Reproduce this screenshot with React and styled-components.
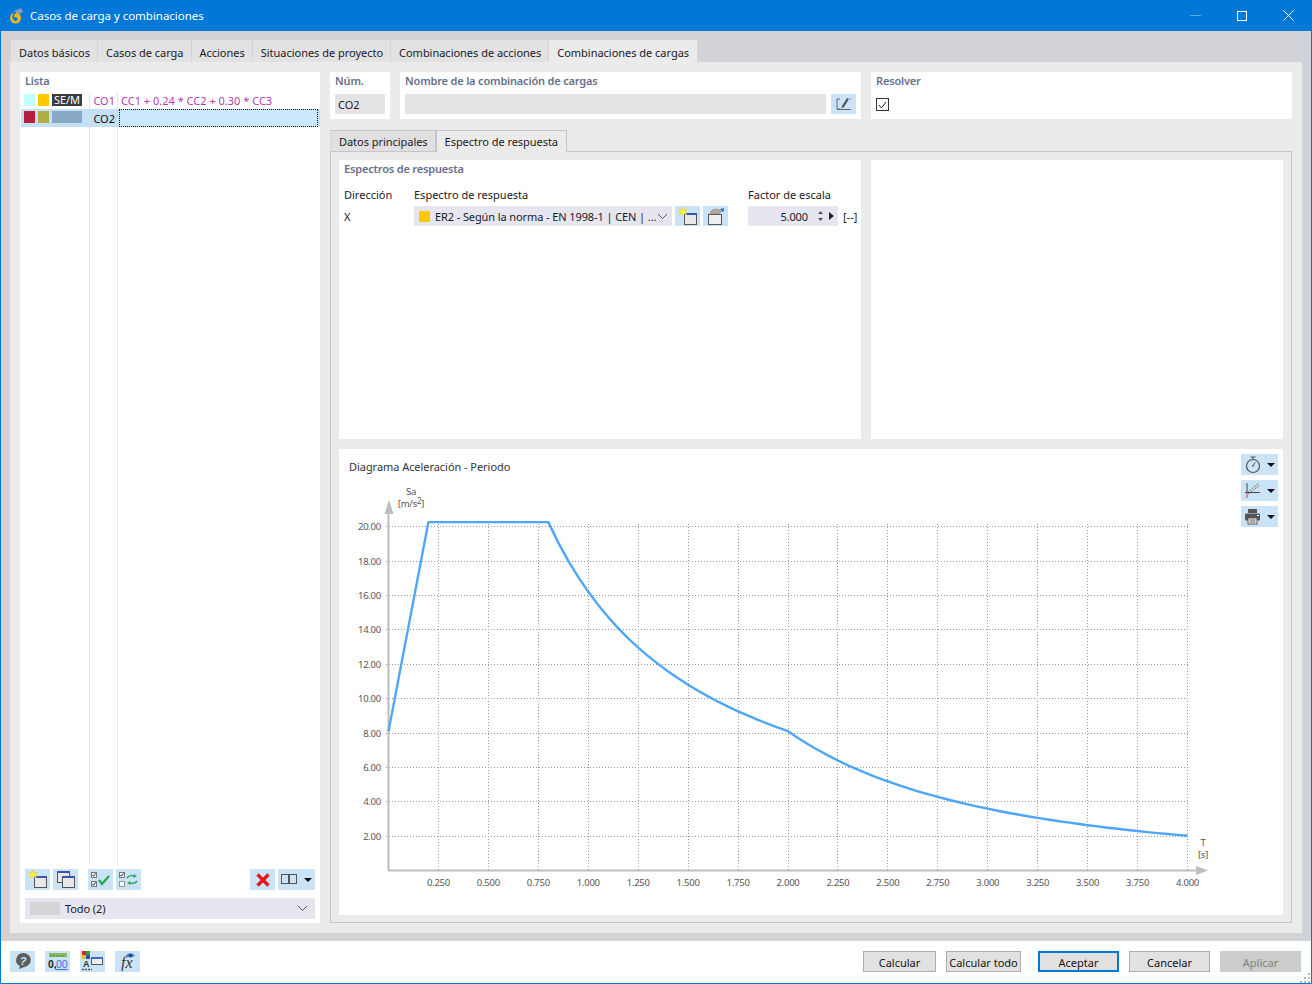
import React from "react";
import styled, { createGlobalStyle } from "styled-components";

const GlobalStyle = createGlobalStyle`
  html, body { margin: 0; padding: 0; background: #fff; }
  * { box-sizing: border-box; }
  body { font-family: "Noto Sans", "Open Sans", sans-serif; font-size: 11px; color: #1a1a1a; }
`;

const Win = styled.div`
  width: 1312px;
  height: 984px;
  display: flex;
  flex-direction: column;
  border: 1px solid #0078d7;
  border-top: 0;
  overflow: hidden;
  background: #fff;
`;

const TitleBar = styled.div`
  height: 31px;
  flex: none;
  margin: 0 -1px;
  background: #0078d7;
  color: #fff;
  display: flex;
  align-items: center;
  padding: 0 1px 0 9px;
  font-size: 11.5px;
`;

const TitleText = styled.span`
  margin-left: 7px;
  flex: 1;
  letter-spacing: -0.03px;
`;

const WinBtn = styled.div`
  width: 46px;
  height: 31px;
  display: flex;
  align-items: center;
  justify-content: center;
`;

const Body = styled.div`
  flex: 1;
  background: #d3d3d7;
  padding: 9px 9px 8px 9px;
  display: flex;
  flex-direction: column;
  min-height: 0;
`;

const TabRow = styled.div`
  display: flex;
  height: 22px;
  padding-left: 1px;
  flex: none;
`;

const MainTab = styled.div`
  padding: 2px 8px 0;
  display: flex;
  align-items: center;
  font-size: 11px;
  letter-spacing: -0.02px;
  background: ${(p) => (p.$active ? "#ebebeb" : "#e2e2e4")};
  box-shadow: inset -1px 0 0 ${(p) => (p.$active ? "#ebebeb" : "#d3d3d7")};
  white-space: nowrap;
`;

const Panel = styled.div`
  flex: 1;
  background: #ebebeb;
  padding: 10px;
  display: flex;
  gap: 10px;
  min-height: 0;
`;

const LeftPane = styled.div`
  width: 300px;
  flex: none;
  background: #fff;
  display: flex;
  flex-direction: column;
  padding-bottom: 4px;
`;

const PaneLabel = styled.div`
  font-size: 11px;
  font-weight: 600;
  letter-spacing: -0.18px;
  color: #66708c;
  padding: 2px 5px 0;
  height: 20px;
  line-height: 14px;
  white-space: nowrap;
`;

const ListArea = styled.div`
  flex: 1;
  position: relative;
  display: flex;
  flex-direction: column;
  background:
    linear-gradient(#e4e4e4, #e4e4e4) 69px 0 / 1px 100% no-repeat,
    linear-gradient(#e4e4e4, #e4e4e4) 97px 0 / 1px 100% no-repeat;
`;

const ListRow = styled.div`
  height: ${(p) => (p.$selected ? 18 : 17)}px;
  display: flex;
  align-items: center;
  margin-left: 1px;
  padding-left: 3px;
  background: ${(p) => (p.$selected ? "#c5dff4" : "transparent")};
  font-size: 11px;
`;

const Swatch = styled.span`
  width: ${(p) => p.$w || 11}px;
  height: 12px;
  margin: -2px 3px 0 0;
  background: ${(p) => p.$c};
  color: #fff;
  font-size: 11px;
  line-height: 12px;
  text-align: center;
  flex: none;
`;

const RowName = styled.span`
  width: 34px;
  text-align: right;
  padding-right: 2px;
  margin-left: -2px;
  flex: none;
  color: ${(p) => p.$c};
`;

const RowFormula = styled.span`
  flex: 1;
  height: 18px;
  line-height: 17px;
  padding-left: 2px;
  margin-left: 2px;
  color: #b63bb0;
  white-space: nowrap;
  ${(p) => p.$focus && `
    background: #cce8ff;
    border: 1px dotted #111;
    margin-right: 2px;
  `}
`;

const ListTools = styled.div`
  height: 21px;
  margin: 4px 5px 8px;
  display: flex;
  align-items: stretch;
`;

const IconBtn = styled.div`
  width: ${(p) => p.$w || 25}px;
  height: ${(p) => p.$h || 21}px;
  flex: none;
  background: #cbe3f6;
  display: flex;
  align-items: center;
  justify-content: center;
  gap: ${(p) => p.$gap || 0}px;
  margin-left: ${(p) => p.$ml || 0}px;
`;

const Caret = styled.span`
  width: 0;
  height: 0;
  border-left: 4px solid transparent;
  border-right: 4px solid transparent;
  border-top: 4px solid #111;
`;

const Combo = styled.div`
  height: 21px;
  margin: 0 5px;
  background: #e6e6f0;
  display: flex;
  align-items: center;
  padding: 0 7px 0 5px;
`;

const ComboText = styled.span`
  flex: 1;
  white-space: nowrap;
  letter-spacing: -0.1px;
`;

const GraySwatch = styled.span`
  width: 30px;
  height: 13px;
  background: #d4d4d4;
  margin-right: 5px;
`;

const RightPane = styled.div`
  flex: 1;
  display: flex;
  flex-direction: column;
  min-width: 0;
`;

const HeaderRow = styled.div`
  display: flex;
  gap: 10px;
  height: 47px;
  flex: none;
`;

const HeaderCard = styled.div`
  background: #fff;
  width: ${(p) => p.$w}px;
  flex: none;
  display: flex;
  flex-direction: column;
`;

const FieldRow = styled.div`
  display: flex;
  gap: 5px;
  padding: 2px 5px 0;
`;

const GrayField = styled.div`
  background: #e4e4e4;
  height: 20px;
  flex: 1;
  display: flex;
  align-items: center;
  padding-left: 3px;
  font-size: 11px;
`;

const CheckBox = styled.div`
  width: 13px;
  height: 13px;
  border: 1px solid #333;
  background: #fff;
  display: flex;
  align-items: center;
  justify-content: center;
  margin-top: 4px;
`;

const SubTabs = styled.div`
  display: flex;
  height: 22px;
  margin-top: 11px;
  flex: none;
  position: relative;
  z-index: 1;
`;

const SubTab = styled.div`
  padding: 0 ${(p) => (p.$active ? 8 : 7)}px 0 8px;
  display: flex;
  align-items: center;
  white-space: nowrap;
  letter-spacing: -0.04px;
  background: ${(p) => (p.$active ? "#ebebeb" : "#e0e0e2")};
  border: 1px solid #c4c4cc;
  border-bottom: ${(p) => (p.$active ? "1px solid #ebebeb" : "1px solid #c4c4cc")};
  border-left: ${(p) => (p.$active ? "1px solid #c4c4cc" : "1px solid #d4d4d4")};
  height: ${(p) => (p.$active ? "23px" : "22px")};
`;

const SubBody = styled.div`
  flex: 1;
  margin-top: -1px;
  border: 1px solid #c4c4cc;
  padding: 8px 8px 7px 8px;
  display: flex;
  flex-direction: column;
  gap: 10px;
  min-height: 0;
`;

const TopCards = styled.div`
  height: 279px;
  flex: none;
  display: flex;
  gap: 10px;
`;

const SpectrumCard = styled.div`
  width: 522px;
  flex: none;
  background: #fff;
`;

const EmptyCard = styled.div`
  flex: 1;
  background: #fff;
`;

const SpectrumGrid = styled.div`
  display: grid;
  grid-template-columns: 70px 334px 1fr;
  grid-template-rows: 20px 24px;
  margin-top: 4px;
  padding-left: 5px;
  align-items: center;
`;

const ComboWide = styled.div`
  display: flex;
  gap: 3px;
  align-items: center;
`;

const SpectrumSelect = styled.div`
  width: 258px;
  height: 20px;
  background: #e6e6f0;
  display: flex;
  align-items: center;
  padding: 0 4px 0 5px;
  flex: none;
`;

const SquareMark = styled.span`
  width: 11px;
  height: 11px;
  background: #ffc800;
  margin-right: 5px;
  flex: none;
`;

const ScaleWrap = styled.div`
  display: flex;
  align-items: center;
  gap: 5px;
  white-space: nowrap;
`;

const ScaleField = styled.div`
  width: 90px;
  height: 20px;
  background: #e6e6f0;
  display: flex;
  align-items: center;
  justify-content: flex-end;
  gap: 6px;
  padding-right: 4px;
`;

const ScaleValue = styled.span`
  margin-right: 4px;
  letter-spacing: -0.1px;
`;

const DiagramCard = styled.div`
  flex: 1;
  background: #fff;
  display: flex;
  min-height: 0;
`;

const ChartColumn = styled.div`
  width: 902px;
  flex: none;
  display: flex;
  flex-direction: column;
`;

const ChartTitle = styled.div`
  height: 36px;
  flex: none;
  padding: 10px 10px 0;
  color: #333;
  letter-spacing: -0.05px;
`;

const ChartTools = styled.div`
  padding-top: 5px;
  display: flex;
  flex-direction: column;
  gap: 5px;
`;

const Footer = styled.div`
  height: 42px;
  flex: none;
  background: #fff;
  position: relative;
  display: flex;
  align-items: center;
  padding: 0 10px 2px 9px;
`;

const FooterIcons = styled.div`
  flex: 1;
  display: flex;
  gap: 10px;
`;

const FooterButtons = styled.div`
  display: flex;
  gap: 10px;
  margin-top: 1px;
`;

const Button = styled.div`
  width: ${(p) => p.$w || 81}px;
  height: 21px;
  display: flex;
  align-items: center;
  justify-content: center;
  padding-top: 1px;
  white-space: nowrap;
  font-size: 11px;
  margin-left: ${(p) => p.$ml || 0}px;
  background: ${(p) => (p.$disabled ? "#cccccc" : "#e1e1e1")};
  color: ${(p) => (p.$disabled ? "#808080" : "#111")};
  border: ${(p) =>
    p.$primary ? "2px solid #0078d7" : p.$disabled ? "1px solid #cccccc" : "1px solid #adadad"};
`;

const Grip = styled.svg`
  position: absolute;
  right: 0;
  bottom: 0;
`;

const Chevron = () => (
  <svg width="11" height="7" viewBox="0 0 11 7">
    <path d="M1 1l4.5 4.5L10 1" fill="none" stroke="#555" strokeWidth="1" />
  </svg>
);

const NewWindowIcon = () => (
  <svg width="20" height="19" viewBox="0 0 20 19">
    <rect x="6.5" y="6.5" width="12" height="11" fill="#e8e8e8" stroke="#555" />
    <rect x="6" y="6" width="13" height="2" fill="#3a55b0" />
    <path d="M5 0l1.2 3 3.3-.6L7.4 5l1.2 3L5 6.4 1.6 8l1-3L0 2.6l3.6.2z" fill="#ffef3a" stroke="#d8c020" strokeWidth=".4" />
  </svg>
);

const CopyWindowIcon = () => (
  <svg width="20" height="19" viewBox="0 0 20 19">
    <rect x="1.5" y="1.5" width="12" height="11" fill="#e8e8e8" stroke="#555" />
    <rect x="1" y="1" width="13" height="2" fill="#3a55b0" />
    <rect x="6.5" y="6.5" width="12" height="11" fill="#e8e8e8" stroke="#555" />
    <rect x="6" y="6" width="13" height="2" fill="#3a55b0" />
  </svg>
);

const ImportWindowIcon = () => (
  <svg width="20" height="19" viewBox="0 0 20 19">
    <rect x="2.5" y="7.5" width="13" height="10" fill="#eee" stroke="#555" />
    <path d="M4 7l1-3 4-2 5 1 1 2-3 2z" fill="#b8a898" stroke="#776" strokeWidth=".5" />
    <path d="M14 2l4-1v3l-2 1z" fill="#4a78c8" />
  </svg>
);

const CheckAllIcon = () => (
  <svg width="20" height="17" viewBox="0 0 20 17">
    <rect x=".5" y="1.5" width="5" height="5" fill="#fff" stroke="#777" />
    <path d="M1.5 4l1 1.3L4.6 2.4" fill="none" stroke="#222" />
    <rect x=".5" y="10.5" width="5" height="5" fill="#fff" stroke="#777" />
    <path d="M1.5 13l1 1.3 2.1-2.9" fill="none" stroke="#222" />
    <path d="M8 9l3 4 7-8" fill="none" stroke="#23a84a" strokeWidth="2.2" />
  </svg>
);

const SwapCheckIcon = () => (
  <svg width="20" height="17" viewBox="0 0 20 17">
    <rect x=".5" y="1.5" width="5" height="5" fill="#fff" stroke="#777" />
    <path d="M1.5 4l1 1.3L4.6 2.4" fill="none" stroke="#222" />
    <rect x=".5" y="10.5" width="5" height="5" fill="#fff" stroke="#999" />
    <path d="M8 7c2-3 6-3 8-1M18 10c-2 3-6 3-8 1" fill="none" stroke="#2aa860" strokeWidth="1.5" />
    <path d="M15 3l3 2.5-4 1zM11 14l-3-2.5 4-1z" fill="#2aa860" />
  </svg>
);

const DeleteIcon = () => (
  <svg width="14" height="14" viewBox="0 0 14 14">
    <path d="M1.5 1.5l11 11M12.5 1.5l-11 11" stroke="#e8141c" strokeWidth="3.2" />
  </svg>
);

const ColumnsIcon = () => (
  <svg width="16" height="11" viewBox="0 0 16 11">
    <rect x=".5" y=".5" width="7" height="9" fill="none" stroke="#555" />
    <rect x="8.5" y=".5" width="7" height="9" fill="none" stroke="#555" />
  </svg>
);

const EditNameIcon = () => (
  <svg width="16" height="14" viewBox="0 0 16 14">
    <path d="M4 2H1v10h3M1 12.5h14" fill="none" stroke="#667" />
    <path d="M11 1l2 1-5 8-2.4 1.4L6 9z" fill="#555" />
    <path d="M14 2h1" stroke="#667" />
  </svg>
);

const StopwatchIcon = () => (
  <svg width="16" height="18" viewBox="0 0 16 18">
    <circle cx="8" cy="10" r="6.5" fill="none" stroke="#555" strokeWidth="1.2" />
    <path d="M5.5 1h5M8 1v2.5M8 10l2-3.5" stroke="#555" fill="none" />
    <circle cx="8" cy="10" r="1" fill="#777" />
  </svg>
);

const AxesIcon = () => (
  <svg width="17" height="17" viewBox="0 0 17 17">
    <path d="M3 1v10M1 10.5h15" stroke="#444" fill="none" />
    <path d="M3 16v-5" stroke="#d04040" fill="none" />
    <path d="M3 10.5L15 1" stroke="#29a050" fill="none" strokeDasharray="2 1" />
    <path d="M4 12L16 3" stroke="#d04040" fill="none" strokeDasharray="2 1" />
  </svg>
);

const PrinterIcon = () => (
  <svg width="17" height="17" viewBox="0 0 17 17">
    <rect x="4" y="1" width="9" height="4" fill="#555" />
    <rect x="1" y="5.5" width="15" height="7" rx="1" fill="#555" />
    <rect x="4" y="10" width="9" height="6" fill="#fff" stroke="#555" />
    <path d="M5.5 12h6M5.5 14h6" stroke="#555" />
    <rect x="13" y="7" width="2" height="1" fill="#fff" />
  </svg>
);

const HelpIcon = () => (
  <svg width="18" height="18" viewBox="0 0 18 18">
    <path d="M9 1a7.5 7 0 0 1 1.5 13.9L5 17l.8-3A7.5 7 0 0 1 9 1z" fill="#5d5d5d" />
    <text x="9" y="12.5" fontSize="11" fontWeight="700" fontStyle="italic" textAnchor="middle" fill="#cbe3f6" fontFamily="Liberation Sans, sans-serif">?</text>
  </svg>
);

const DecimalsIcon = () => (
  <svg width="20" height="19" viewBox="0 0 20 19">
    <rect x="1" y="1" width="18" height="4" fill="#8cb860" />
    <path d="M3 5V3M6 5V3M9 5V3M12 5V3M15 5V3" stroke="#5c8a3a" />
    <text x="0" y="16" fontSize="10.5" fontWeight="700" fill="#222" fontFamily="Liberation Sans, sans-serif">0,</text>
    <text x="8" y="16" fontSize="10.5" fill="#3a70d8" textDecoration="underline" fontFamily="Liberation Sans, sans-serif">00</text>
  </svg>
);

const ColorsIcon = () => (
  <svg width="22" height="20" viewBox="0 0 22 20">
    <rect x="0" y="0" width="4" height="4" fill="#e02020" />
    <rect x="4" y="0" width="4" height="4" fill="#30a040" />
    <rect x="0" y="4" width="4" height="4" fill="#e8c020" />
    <rect x="4" y="4" width="4" height="4" fill="#3050c8" />
    <rect x="9.5" y="6.5" width="11" height="7" fill="#eee" stroke="#555" />
    <rect x="9" y="6" width="12" height="2" fill="#4466cc" />
    <text x="1" y="16" fontSize="9" fontWeight="700" fill="#333" fontFamily="Liberation Sans, sans-serif">A</text>
    <path d="M0 18.5h10" stroke="#555" strokeDasharray="2 1" strokeWidth="1.5" />
  </svg>
);

const FormulaIcon = () => (
  <svg width="22" height="20" viewBox="0 0 22 20">
    <text x="4" y="17" fontSize="16" fontStyle="italic" fill="#333" fontFamily="Liberation Serif, serif">fx</text>
    <path d="M9 4.5q4-4.5 9 0q-5 4-9 0z" fill="#4a78c8" />
    <circle cx="13.5" cy="4.5" r="1.5" fill="#1d3a78" />
  </svg>
);

const AppIcon = () => (
  <svg width="14" height="16" viewBox="0 0 14 16">
    <path d="M5 3l7-3 2 4-6 3z" fill="#8a9ab8" />
    <circle cx="6.5" cy="10" r="5.5" fill="#e8b820" />
    <circle cx="6.5" cy="11" r="2" fill="#0078d7" />
    <path d="M7 4Q3 7 4.5 11" fill="none" stroke="#0078d7" strokeWidth="1.4" />
  </svg>
);

// chart scale, in page pixels so the numbers can be read off the screenshot
const OX = 388.5;
const PX = 199.75;
const OY = 870.7;
const PY = 17.2;
const px = (t) => OX + PX * t;
const py = (v) => OY - PY * v;
// dotted grid lines sit on whole pixels so they stay crisp
const snap = (n) => Math.floor(n) + 0.5;

const spectrum = () => {
  const top = 20.27;
  const pts = [[0, 8.1], [0.2, top], [0.8, top]];
  for (let t = 0.85; t <= 2.001; t += 0.05) pts.push([t, (top * 0.8) / t]);
  const atTwo = top * 0.4;
  for (let t = 2.05; t <= 4.001; t += 0.05) pts.push([t, (atTwo * 4) / (t * t)]);
  return pts.map(([t, v], i) => `${i ? "L" : "M"}${px(t).toFixed(1)} ${py(v).toFixed(1)}`).join(" ");
};

const xTicks = Array.from({ length: 16 }, (_, i) => (i + 1) * 0.25);
const yTicks = Array.from({ length: 10 }, (_, i) => (i + 1) * 2);

const ChartLabel = styled.text`
  font-family: "Noto Sans", sans-serif;
  font-size: 9.5px;
  letter-spacing: -0.25px;
  fill: #555;
`;

const Chart = () => (
  <svg width="902" height="430" viewBox="339 485 902 430">
    {xTicks.map((t) => (
      <line key={t} x1={snap(px(t))} x2={snap(px(t))} y1="524" y2="871" stroke="#999" strokeDasharray="1 2" />
    ))}
    {yTicks.map((v) => (
      <line key={v} x1="386" x2="1188" y1={snap(py(v))} y2={snap(py(v))} stroke="#999" strokeDasharray="1 2" />
    ))}
    <path d="M388.5 871V512M388 870.5H1198" stroke="#bdbdbd" strokeWidth="2" fill="none" />
    <path d="M389 500l4.5 14h-9z" fill="#bdbdbd" />
    <path d="M1208 870.5l-12-4.5v9z" fill="#bdbdbd" />
    <path d={spectrum()} fill="none" stroke="#4da6fa" strokeWidth="2.4" strokeLinejoin="round" />
    {yTicks.map((v) => (
      <ChartLabel key={v} x="381" y={py(v) + 3.5} textAnchor="end">{v.toFixed(2)}</ChartLabel>
    ))}
    {xTicks.map((t) => (
      <ChartLabel key={t} x={px(t)} y="886" textAnchor="middle">{t.toFixed(3)}</ChartLabel>
    ))}
    <ChartLabel x="411" y="495" textAnchor="middle">Sa</ChartLabel>
    <ChartLabel x="411" y="507" textAnchor="middle">[m/s<tspan dy="-3" fontSize="8">2</tspan><tspan dy="3">]</tspan></ChartLabel>
    <ChartLabel x="1203" y="846" textAnchor="middle">T</ChartLabel>
    <ChartLabel x="1203" y="858" textAnchor="middle">[s]</ChartLabel>
  </svg>
);

const mainTabs = [
  "Datos básicos",
  "Casos de carga",
  "Acciones",
  "Situaciones de proyecto",
  "Combinaciones de acciones",
];

export default function App() {
  return (
    <>
      <GlobalStyle />
      <Win>
        <TitleBar>
          <AppIcon />
          <TitleText>Casos de carga y combinaciones</TitleText>
          <WinBtn>
            <svg width="12" height="2"><path d="M0 .5h11" stroke="#5aa7e6" /></svg>
          </WinBtn>
          <WinBtn>
            <svg width="10" height="10"><rect x=".5" y=".5" width="9" height="9" fill="none" stroke="#fff" /></svg>
          </WinBtn>
          <WinBtn>
            <svg width="11" height="11"><path d="M.5.5l10 10M10.5.5l-10 10" stroke="#fff" /></svg>
          </WinBtn>
        </TitleBar>
        <Body>
          <TabRow>
            {mainTabs.map((t) => <MainTab key={t}>{t}</MainTab>)}
            <MainTab $active>Combinaciones de cargas</MainTab>
          </TabRow>
          <Panel>
            <LeftPane>
              <PaneLabel>Lista</PaneLabel>
              <ListArea>
                <ListRow>
                  <Swatch $c="#c4ffff" />
                  <Swatch $c="#ffc800" />
                  <Swatch $c="#3c3c3c" $w={30}>SE/M</Swatch>
                  <RowName $c="#b63bb0">CO1</RowName>
                  <RowFormula>CC1 + 0.24 * CC2 + 0.30 * CC3</RowFormula>
                </ListRow>
                <ListRow $selected>
                  <Swatch $c="#b5203f" />
                  <Swatch $c="#adb040" />
                  <Swatch $c="#88a9c6" $w={30} />
                  <RowName $c="#111">CO2</RowName>
                  <RowFormula $focus />
                </ListRow>
              </ListArea>
              <ListTools>
                <IconBtn><NewWindowIcon /></IconBtn>
                <IconBtn $ml={3}><CopyWindowIcon /></IconBtn>
                <IconBtn $ml={10}><CheckAllIcon /></IconBtn>
                <IconBtn $ml={3}><SwapCheckIcon /></IconBtn>
                <IconBtn $ml={109}><DeleteIcon /></IconBtn>
                <IconBtn $ml={3} $w={37} $gap={7}><ColumnsIcon /><Caret /></IconBtn>
              </ListTools>
              <Combo>
                <GraySwatch />
                <ComboText>Todo (2)</ComboText>
                <Chevron />
              </Combo>
            </LeftPane>
            <RightPane>
              <HeaderRow>
                <HeaderCard $w={60}>
                  <PaneLabel>Núm.</PaneLabel>
                  <FieldRow><GrayField>CO2</GrayField></FieldRow>
                </HeaderCard>
                <HeaderCard $w={461}>
                  <PaneLabel>Nombre de la combinación de cargas</PaneLabel>
                  <FieldRow>
                    <GrayField />
                    <IconBtn $h={20}><EditNameIcon /></IconBtn>
                  </FieldRow>
                </HeaderCard>
                <HeaderCard $w={421}>
                  <PaneLabel>Resolver</PaneLabel>
                  <FieldRow>
                    <CheckBox>
                      <svg width="9" height="8"><path d="M1 4l2.5 3L8 1" fill="none" stroke="#222" /></svg>
                    </CheckBox>
                  </FieldRow>
                </HeaderCard>
              </HeaderRow>
              <SubTabs>
                <SubTab>Datos principales</SubTab>
                <SubTab $active>Espectro de respuesta</SubTab>
              </SubTabs>
              <SubBody>
                <TopCards>
                  <SpectrumCard>
                    <PaneLabel>Espectros de respuesta</PaneLabel>
                    <SpectrumGrid>
                      <span>Dirección</span>
                      <span>Espectro de respuesta</span>
                      <span>Factor de escala</span>
                      <span>X</span>
                      <ComboWide>
                        <SpectrumSelect>
                          <SquareMark />
                          <ComboText>ER2 - Según la norma - EN 1998-1 | CEN | ...</ComboText>
                          <Chevron />
                        </SpectrumSelect>
                        <IconBtn $h={20}><NewWindowIcon /></IconBtn>
                        <IconBtn $h={20}><ImportWindowIcon /></IconBtn>
                      </ComboWide>
                      <ScaleWrap>
                        <ScaleField>
                          <ScaleValue>5.000</ScaleValue>
                          <svg width="5" height="12"><path d="M2.5 1L5 4H0zM2.5 11L0 8h5z" fill="#555" /></svg>
                          <svg width="5" height="8"><path d="M0 0l5 4-5 4z" fill="#222" /></svg>
                        </ScaleField>
                        <span>[--]</span>
                      </ScaleWrap>
                    </SpectrumGrid>
                  </SpectrumCard>
                  <EmptyCard />
                </TopCards>
                <DiagramCard>
                  <ChartColumn>
                    <ChartTitle>Diagrama Aceleración - Periodo</ChartTitle>
                    <Chart />
                  </ChartColumn>
                  <ChartTools>
                    <IconBtn $w={37} $gap={6}><StopwatchIcon /><Caret /></IconBtn>
                    <IconBtn $w={37} $gap={6}><AxesIcon /><Caret /></IconBtn>
                    <IconBtn $w={37} $gap={6}><PrinterIcon /><Caret /></IconBtn>
                  </ChartTools>
                </DiagramCard>
              </SubBody>
            </RightPane>
          </Panel>
        </Body>
        <Footer>
          <FooterIcons>
            <IconBtn><HelpIcon /></IconBtn>
            <IconBtn><DecimalsIcon /></IconBtn>
            <IconBtn><ColorsIcon /></IconBtn>
            <IconBtn><FormulaIcon /></IconBtn>
          </FooterIcons>
          <FooterButtons>
            <Button $w={73}>Calcular</Button>
            <Button $w={75}>Calcular todo</Button>
            <Button $ml={7} $primary>Aceptar</Button>
            <Button>Cancelar</Button>
            <Button $disabled>Aplicar</Button>
          </FooterButtons>
          <Grip width="11" height="11" viewBox="0 0 11 11">
            <path d="M8 1h2v2H8zM4 5h2v2H4zM8 5h2v2H8zM0 9h2v2H0zM4 9h2v2H4zM8 9h2v2H8z" fill="#b8b8b8" />
          </Grip>
        </Footer>
      </Win>
    </>
  );
}
